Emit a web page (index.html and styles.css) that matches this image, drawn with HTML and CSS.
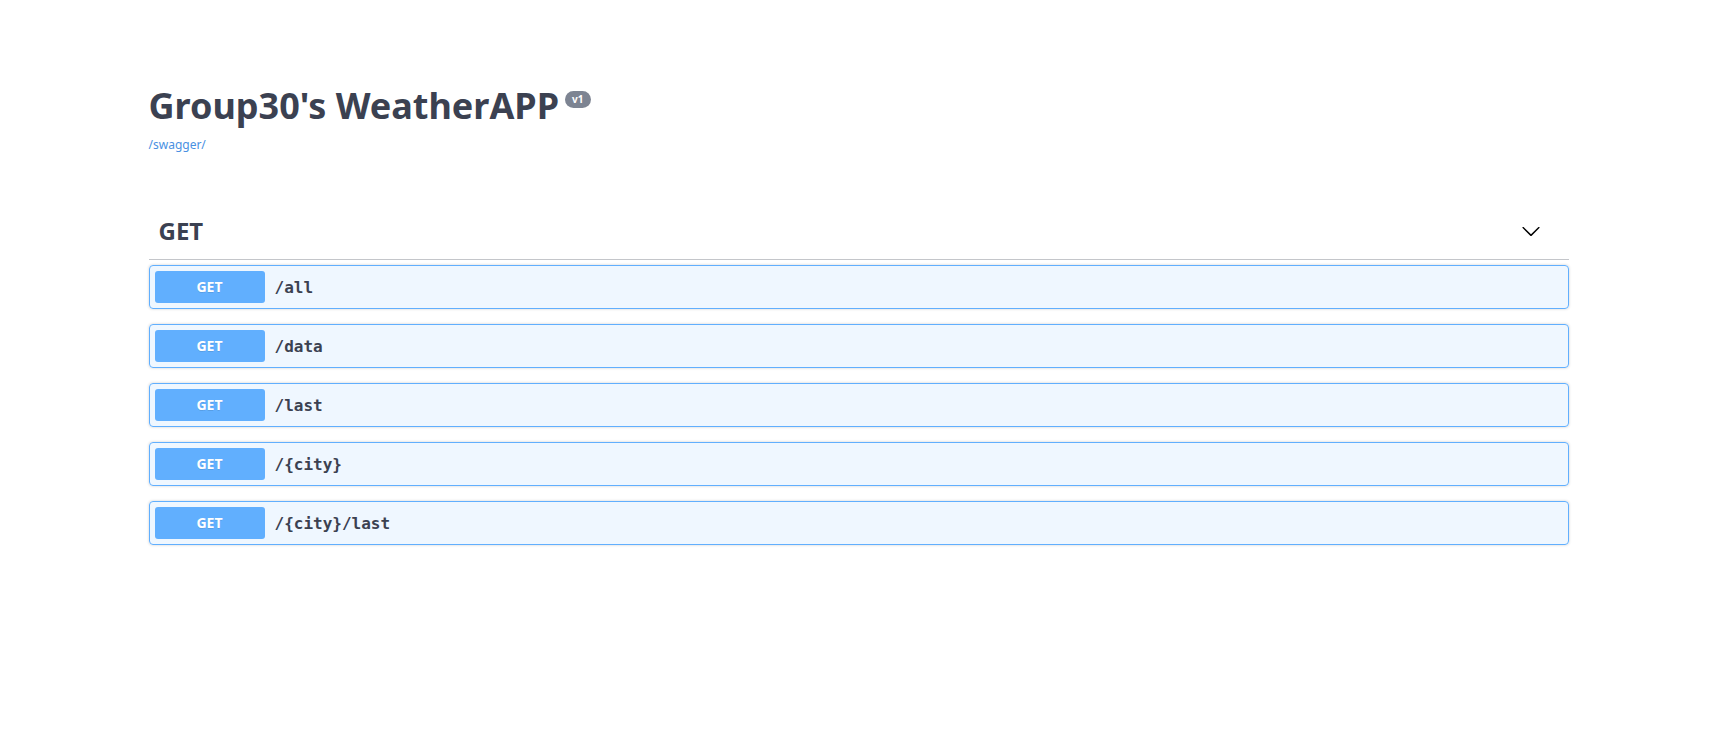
FILE: index.html
```html
<!DOCTYPE html>
<html>
<head>
  <meta charset="utf-8">
  <meta name="viewport" content="width=device-width, initial-scale=1">
  <title>Group30's WeatherAPP</title>
  <link rel="stylesheet" href="styles.css">
</head>
<body>
  <div class="wrapper">
    <div class="info">
      <h2 class="title">Group30's WeatherAPP<small class="version">v1</small></h2>
      <a class="base-link" href="#">/swagger/</a>
    </div>

    <div class="tag-section">
      <h3 class="opblock-tag">
        <span class="tag-name">GET</span>
        <button class="expand-btn">
          <svg width="20" height="20" viewBox="0 0 20 20" aria-hidden="true">
            <path d="M17.418 6.109c.272-.268.709-.268.979 0s.271.701 0 .969l-7.908 7.83c-.27.268-.707.268-.979 0l-7.908-7.83c-.27-.268-.27-.701 0-.969.271-.268.709-.268.979 0L10 13.25l7.418-7.141z"/>
          </svg>
        </button>
      </h3>

      <div class="opblock">
        <div class="opblock-summary">
          <span class="method">GET</span>
          <span class="path">/all</span>
        </div>
      </div>
      <div class="opblock">
        <div class="opblock-summary">
          <span class="method">GET</span>
          <span class="path">/data</span>
        </div>
      </div>
      <div class="opblock">
        <div class="opblock-summary">
          <span class="method">GET</span>
          <span class="path">/last</span>
        </div>
      </div>
      <div class="opblock">
        <div class="opblock-summary">
          <span class="method">GET</span>
          <span class="path">/{city}</span>
        </div>
      </div>
      <div class="opblock">
        <div class="opblock-summary">
          <span class="method">GET</span>
          <span class="path">/{city}/last</span>
        </div>
      </div>
    </div>
  </div>
</body>
</html>
```

FILE: styles.css
```css
body {
  font-family: 'Noto Sans', 'Open Sans', sans-serif;
  margin: 0;
  background: #fff;
  color: #3b4151;
}

.wrapper {
  max-width: 1460px;
  margin: 0 auto;
  padding: 0 21px 0 19px;
  box-sizing: border-box;
}

.info {
  margin: 81px 0 52px;
}

.title {
  margin: 0;
  font-size: 36px;
  font-weight: 700;
  color: #3b4151;
}

.version {
  display: inline-block;
  position: relative;
  top: -16px;
  margin-left: 6px;
  padding: 2px 7px;
  border-radius: 57px;
  background: #7d8492;
  color: #fff;
  font-size: 10px;
  font-weight: 700;
  line-height: 13px;
  vertical-align: baseline;
}

.base-link {
  display: block;
  margin-top: 6px;
  font-size: 12px;
  color: #4990e2;
  text-decoration: none;
}

.opblock-tag {
  display: flex;
  align-items: center;
  margin: 0 0 5px;
  padding: 9px 20px 12px 10px;
  border-bottom: 1px solid rgba(59, 65, 81, 0.3);
  font-size: 24px;
  font-weight: 700;
  color: #3b4151;
}

.tag-name {
  flex: 1;
}

.expand-btn {
  background: none;
  border: none;
  padding: 0 8px 0 0;
  margin-top: 0;
  cursor: pointer;
  display: flex;
}

.opblock {
  margin: 0 0 15px;
  border: 1px solid #61affe;
  border-radius: 4px;
  background: rgba(97, 175, 254, 0.1);
  box-shadow: 0 0 3px rgba(0, 0, 0, 0.19);
}

.opblock-summary {
  display: flex;
  align-items: center;
  padding: 5px;
}

.method {
  min-width: 110px;
  padding: 6px 0;
  border-radius: 3px;
  background: #61affe;
  color: #fff;
  font-size: 14px;
  font-weight: 700;
  line-height: 20px;
  text-align: center;
  text-shadow: 0 1px 0 rgba(0, 0, 0, 0.1);
}

.path {
  padding: 0 10px;
  font-family: 'DejaVu Sans Mono', monospace;
  font-size: 16px;
  font-weight: 600;
  color: #3b4151;
}
```
